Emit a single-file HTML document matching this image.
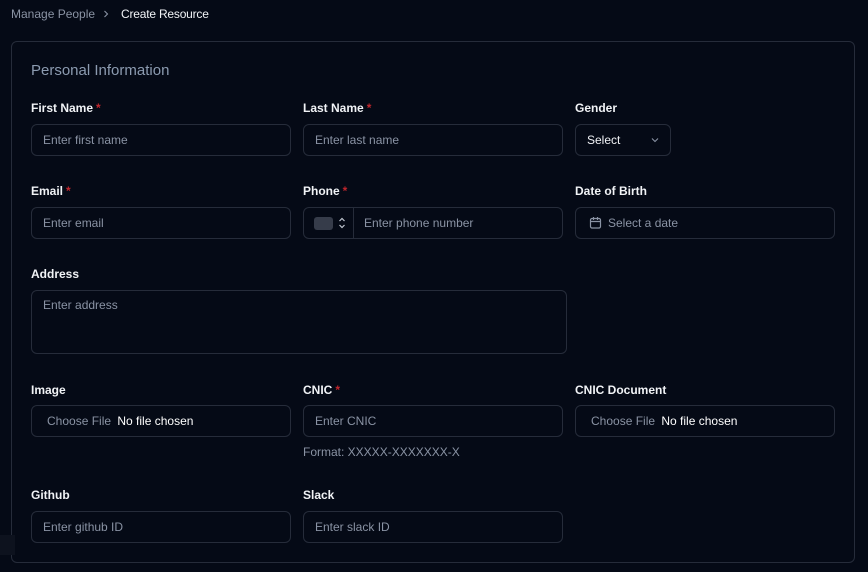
<!DOCTYPE html><html><head><style>
*{box-sizing:border-box;margin:0;padding:0}
body{width:868px;height:572px;background:#050a16;font-family:"Liberation Sans",sans-serif;position:relative;overflow:hidden;color:#fff}
.a{position:absolute}
.lbl{position:absolute;font-size:12px;font-weight:bold;color:#f1f3f6}
.lbl i{font-style:normal;color:#c0262d;margin-left:3px}
.in{position:absolute;height:32px;border:1px solid #262c3a;border-radius:6px;font-size:12px;color:#8a93a4;padding-left:11px;line-height:30px}
</style></head><body>
<div class="a" style="left:11px;top:7px;font-size:12px;color:#8a93a4">Manage People</div>
<svg class="a" style="left:103px;top:10px" width="6" height="8" viewBox="0 0 6 8" fill="none" stroke="#8a93a4" stroke-width="1.1"><path d="M1.5 1l3 3-3 3"/></svg>
<div class="a" style="left:121px;top:7px;font-size:12px;color:#f1f3f6;letter-spacing:-0.2px">Create Resource</div>
<div class="a" style="left:11px;top:41px;width:844px;height:522px;border:1px solid #262c3a;border-radius:6px"></div>
<div class="a" style="left:0;top:535px;width:15px;height:20px;background:#0d121e"></div>
<div class="a" style="left:31px;top:62px;font-size:15px;color:#8c9bb0">Personal Information</div>

<div class="lbl" style="left:31px;top:101px">First Name<i>*</i></div>
<div class="lbl" style="left:303px;top:101px">Last Name<i>*</i></div>
<div class="lbl" style="left:575px;top:101px">Gender</div>
<div class="in" style="left:31px;top:124px;width:260px">Enter first name</div>
<div class="in" style="left:303px;top:124px;width:260px">Enter last name</div>
<div class="in" style="left:575px;top:124px;width:96px;color:#f1f3f6">Select<svg class="a" style="left:75px;top:12px" width="8" height="6" viewBox="0 0 8 6" fill="none" stroke="#8a93a4" stroke-width="1.1"><path d="M1 1.5l3 3 3-3"/></svg></div>

<div class="lbl" style="left:31px;top:184px">Email<i>*</i></div>
<div class="lbl" style="left:303px;top:184px">Phone<i>*</i></div>
<div class="lbl" style="left:575px;top:184px">Date of Birth</div>
<div class="in" style="left:31px;top:207px;width:260px">Enter email</div>
<div class="in" style="left:303px;top:207px;width:260px;padding-left:60px">Enter phone number
<div class="a" style="left:10px;top:9px;width:19px;height:13px;background:#363c4a;border-radius:3px"></div>
<svg class="a" style="left:34px;top:8px" width="8" height="14" viewBox="0 0 8 14" fill="none" stroke="#c0c6d0" stroke-width="1.2"><path d="M1.5 5l2.5-2.5 2.5 2.5M1.5 9l2.5 2.5 2.5-2.5"/></svg>
<div class="a" style="left:49px;top:0;width:1px;height:30px;background:#262c3a"></div></div>
<div class="in" style="left:575px;top:207px;width:260px;padding-left:32px">Select a date
<svg class="a" style="left:13px;top:8px" width="13" height="13" viewBox="0 0 13 13" fill="none" stroke="#8a93a4" stroke-width="1.2"><rect x="1.5" y="2.5" width="10" height="9.5" rx="1.5"/><path d="M1.5 5.5h10M4.5 1v3M8.5 1v3"/></svg></div>

<div class="lbl" style="left:31px;top:267px">Address</div>
<div class="in" style="left:31px;top:290px;width:536px;height:64px;line-height:28px">Enter address</div>

<div class="lbl" style="left:31px;top:383px">Image</div>
<div class="lbl" style="left:303px;top:383px">CNIC<i>*</i></div>
<div class="lbl" style="left:575px;top:383px">CNIC Document</div>
<div class="in" style="left:31px;top:405px;width:260px;padding-left:15px">Choose File <span style="color:#fff;margin-left:3px">No file chosen</span></div>
<div class="in" style="left:303px;top:405px;width:260px">Enter CNIC</div>
<div class="in" style="left:575px;top:405px;width:260px;padding-left:15px">Choose File <span style="color:#fff;margin-left:3px">No file chosen</span></div>
<div class="a" style="left:303px;top:445px;font-size:12px;color:#8a93a4">Format: XXXXX-XXXXXXX-X</div>

<div class="lbl" style="left:31px;top:488px">Github</div>
<div class="lbl" style="left:303px;top:488px">Slack</div>
<div class="in" style="left:31px;top:511px;width:260px">Enter github ID</div>
<div class="in" style="left:303px;top:511px;width:260px">Enter slack ID</div>
</body></html>
